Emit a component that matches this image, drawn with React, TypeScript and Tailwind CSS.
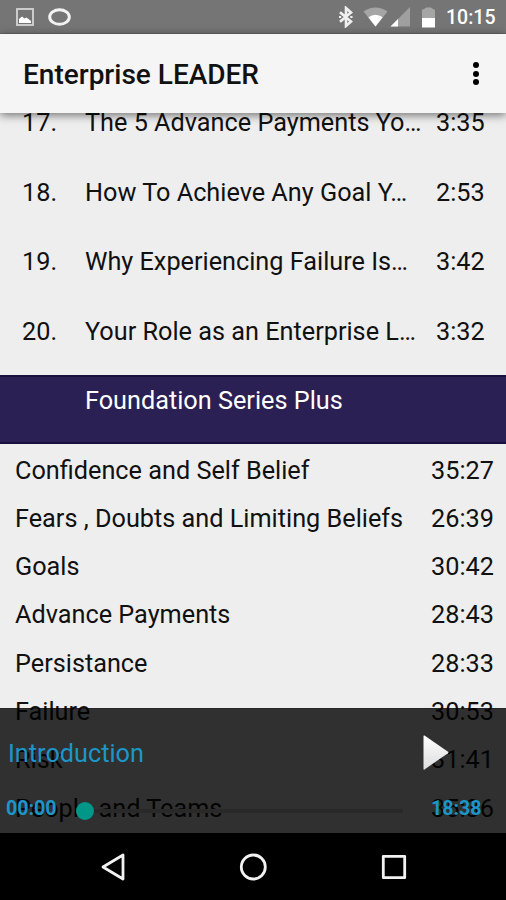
const lessons = [
  { number: "17.", title: "The 5 Advance Payments Yo…", time: "3:35" },
  { number: "18.", title: "How To Achieve Any Goal Y…", time: "2:53" },
  { number: "19.", title: "Why Experiencing Failure Is…", time: "3:42" },
  { number: "20.", title: "Your Role as an Enterprise L…", time: "3:32" },
];

const foundationSeries = [
  { title: "Confidence and Self Belief", time: "35:27" },
  { title: "Fears , Doubts and Limiting Beliefs", time: "26:39" },
  { title: "Goals", time: "30:42" },
  { title: "Advance Payments", time: "28:43" },
  { title: "Persistance", time: "28:33" },
  { title: "Failure", time: "30:53" },
  { title: "Risk", time: "31:41" },
  { title: "People and Teams", time: "35:36" },
];

function StatusBar() {
  return (
    <div className="flex h-[34px] shrink-0 items-center border-b border-[#666] bg-[#757575] pl-4 pr-[10px] text-white">
      <svg className="mt-px h-[18px] w-[18px]" viewBox="0 0 18 18">
        <rect x="1" y="1" width="16" height="16" fill="none" stroke="#d5d5d5" strokeWidth="1.8" />
        <path d="M3 15v-4l3-2.500 2.500 2 2-1 4.500 3.500v2z" fill="#fff" />
      </svg>
      <svg className="ml-[14px] mt-px h-[20px] w-[24px]" viewBox="0 0 24 20">
        <ellipse cx="11.500" cy="10" rx="9.800" ry="7.300" fill="none" stroke="#f2f2f2" strokeWidth="3" />
        <path d="M4.500 5.200Q11.500 .2 18.500 5.200" fill="none" stroke="#f2f2f2" strokeWidth="2" />
      </svg>
      <svg className="ml-auto h-[22px] w-[16px]" viewBox="0 0 16 22">
        <path d="M2 6.2l11 9.4-5 4.4V2l5 4.4-11 9.4" fill="none" stroke="#f0f0f0" strokeWidth="2.6" />
        <path d="M1 11h2.200M12.300 11h2.200" stroke="#f0f0f0" strokeWidth="2.200" />
      </svg>
      <svg className="ml-[9px] h-[20px] w-[25px]" viewBox="0 0 25 20">
        <path d="M12.5 19.5L.5 4.4Q12.500-3.600 24.500 4.400z" fill="#a5a5a5" />
        <path d="M12.500 19.500L5.300 10.300Q12.500 5.300 19.700 10.300z" fill="#fff" />
      </svg>
      <svg className="ml-[2px] h-[20px] w-[20px]" viewBox="0 0 20 20">
        <path d="M20 0v19.500H.5z" fill="#a0a0a0" />
        <path d="M8 12v7.500H.5z" fill="#fff" />
      </svg>
      <svg className="ml-[11px] mt-px h-[21px] w-[15px]" viewBox="0 0 15 21">
        <path d="M1 3Q1 2.500 3 2L5 .5h5L12 2q2 .5 2 1v8H1z" fill="#a5a5a5" />
        <path d="M1 11h13v9.500H1z" fill="#fff" />
      </svg>
      <span className="ml-[10px] w-[50px] whitespace-nowrap pt-[2px] text-[19.5px] font-medium leading-[32px]">10:15</span>
    </div>
  );
}

function Player() {
  return (
    <div className="absolute inset-x-0 bottom-0 h-[125px] border-t border-black/20 bg-black/80 text-[#1c96c8]">
      <div className="flex h-[86px] items-center pl-[8px] pr-[56px]">
        <span className="mt-[3px] text-[25.25px] leading-8">Introduction</span>
        <svg className="ml-auto h-[37px] w-[28px]" viewBox="0 0 28 37">
          <defs>
            <linearGradient id="play" x2="0" y2="1">
              <stop stopColor="#fff" />
              <stop offset="1" stopColor="#ddd" />
            </linearGradient>
          </defs>
          <path d="M1.500 2Q1.500 1 2.500 1.600L26 17.800Q27 18.500 26 19.200L2.500 35.400Q1.500 36 1.500 35z" fill="url(#play)" />
        </svg>
      </div>
      <div className="flex h-7 items-center pl-[6px] text-[19.6px] font-bold leading-7">
        <span className="w-[70px]">00:00</span>
        <div className="mt-[3px] flex w-[327px] items-center">
          <span className="h-[18px] w-[18px] rounded-full bg-[#009788]" />
          <span className="h-1 flex-1 bg-[#292929]" />
        </div>
        <span className="ml-[28px]">18:38</span>
      </div>
    </div>
  );
}

function NavigationBar() {
  return (
    <div className="flex h-[67px] shrink-0 items-center justify-center gap-[112px] bg-black">
      <svg className="h-[28px] w-[28px]" viewBox="0 0 28 28" fill="none" stroke="#f2f2f2" strokeWidth="2.800" strokeLinejoin="round">
        <path d="M4 14L24 2v24z" />
      </svg>
      <svg className="h-[28px] w-[28px]" viewBox="0 0 28 28" fill="none" stroke="#f2f2f2" strokeWidth="2.800">
        <circle cx="14.300" cy="14" r="12" />
      </svg>
      <svg className="ml-px h-[28px] w-[28px]" viewBox="0 0 28 28" fill="none" stroke="#f2f2f2" strokeWidth="2.800" strokeLinejoin="round">
        <rect x="3.300" y="3.300" width="21.400" height="21.400" />
      </svg>
    </div>
  );
}

export default function App() {
  return (
    <div className="flex h-[900px] w-[506px] flex-col overflow-hidden bg-[#eee] font-[Roboto,sans-serif] text-[#111]">
      <StatusBar />
      <header className="relative z-10 flex h-[79px] shrink-0 items-center bg-[#f5f5f5] pl-[23px] pr-[27px] shadow-[0_2px_9px_rgba(0,0,0,0.55)]">
        <h1 className="whitespace-nowrap pt-[3px] text-[28px] font-medium leading-8">Enterprise LEADER</h1>
        <div className="ml-auto flex flex-col gap-[2.5px]">
          <i className="h-[6px] w-[6px] rounded-full bg-black" />
          <i className="h-[6px] w-[6px] rounded-full bg-black" />
          <i className="h-[6px] w-[6px] rounded-full bg-black" />
        </div>
      </header>

      <main className="relative min-h-0 flex-1 overflow-hidden text-[25.25px] leading-8">
        <div className="-mt-[16px]">
          {lessons.map((l) => (
            <div key={l.number} className="flex h-[69.500px] whitespace-nowrap pl-[22px] pt-[10px]">
              <span className="w-[63px]">{l.number}</span>
              <span className="w-[351px]">{l.title}</span>
              <span>{l.time}</span>
            </div>
          ))}
          <div className="h-[69px] border-y-2 border-[#18103d] bg-[#2b2053] pl-[85px] pt-[8px] text-white">
            Foundation Series Plus
          </div>
          {foundationSeries.map((s) => (
            <div key={s.title} className="flex h-[48.300px] whitespace-nowrap pl-[15px] pt-[10.5px]">
              <span className="w-[416px]">{s.title}</span>
              <span>{s.time}</span>
            </div>
          ))}
        </div>
        <Player />
      </main>
      <NavigationBar />
    </div>
  );
}
